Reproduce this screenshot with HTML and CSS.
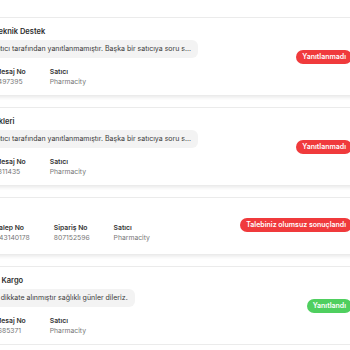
FILE: index.html
```html
<!DOCTYPE html>
<html lang="tr">

<head>
    <meta charset="UTF-8">
    <meta name="viewport" content="width=device-width, initial-scale=1.0">
    <title>Mesajlarım</title>
    <link rel="stylesheet" href="styles.css">
</head>

<body>
    <div class="messages">
        <div class="card">
            <div class="card-main">
                <div class="card-title">Ürün ve Teknik Destek</div>
                <div class="bubble">Mesaj satıcı tarafından yanıtlanmamıştır. Başka bir satıcıya soru s...</div>
                <div class="meta">
                    <div class="meta-item">
                        <span class="meta-label">Mesaj No</span>
                        <span class="meta-value">1497395</span>
                    </div>
                    <div class="meta-item">
                        <span class="meta-label">Satıcı</span>
                        <span class="meta-value">Pharmacity</span>
                    </div>
                </div>
            </div>
            <span class="status status-red">Yanıtlanmadı</span>
        </div>

        <div class="card">
            <div class="card-main">
                <div class="card-title">İlaç Özellikleri</div>
                <div class="bubble">Mesaj satıcı tarafından yanıtlanmamıştır. Başka bir satıcıya soru s...</div>
                <div class="meta">
                    <div class="meta-item">
                        <span class="meta-label">Mesaj No</span>
                        <span class="meta-value">1811435</span>
                    </div>
                    <div class="meta-item">
                        <span class="meta-label">Satıcı</span>
                        <span class="meta-value">Pharmacity</span>
                    </div>
                </div>
            </div>
            <span class="status status-red">Yanıtlanmadı</span>
        </div>

        <div class="card card-request">
            <div class="card-main">
                <div class="card-title">İade</div>
                <div class="meta">
                    <div class="meta-item">
                        <span class="meta-label">Talep No</span>
                        <span class="meta-value">243140178</span>
                    </div>
                    <div class="meta-item">
                        <span class="meta-label">Sipariş No</span>
                        <span class="meta-value">807152596</span>
                    </div>
                    <div class="meta-item">
                        <span class="meta-label">Satıcı</span>
                        <span class="meta-value">Pharmacity</span>
                    </div>
                </div>
            </div>
            <span class="status status-red">Talebiniz olumsuz sonuçlandı</span>
        </div>

        <div class="card">
            <div class="card-main">
                <div class="card-title">Sipariş ve Kargo</div>
                <div class="bubble">Öneriniz dikkate alınmıştır sağlıklı günler dileriz.</div>
                <div class="meta">
                    <div class="meta-item">
                        <span class="meta-label">Mesaj No</span>
                        <span class="meta-value">1685371</span>
                    </div>
                    <div class="meta-item">
                        <span class="meta-label">Satıcı</span>
                        <span class="meta-value">Pharmacity</span>
                    </div>
                </div>
            </div>
            <span class="status status-green">Yanıtlandı</span>
        </div>
    </div>
</body>

</html>
```

FILE: styles.css
```css
body {
    margin: 0;
    background-color: #fff;
    font-family: Inter, "Noto Sans", sans-serif;
    color: #333;
}

.messages {
    display: flex;
    flex-direction: column;
    gap: 11px;
    margin: 17px -16px 0 -50px;
}

.card {
    display: flex;
    justify-content: space-between;
    align-items: center;
    padding: 9px 13px 8px;
    background-color: #fff;
    border: 1px solid #ebebeb;
    box-shadow: 0 2px 3px rgba(0, 0, 0, 0.07);
}

.card-request {
    padding-bottom: 11px;
}

.card-main {
    display: flex;
    flex-direction: column;
    align-items: flex-start;
}

.card-title {
    margin-bottom: 3px;
    font-size: 7.5px;
    font-weight: 600;
    line-height: 10px;
    color: #2d2d2d;
}

.bubble {
    margin-bottom: 6px;
    padding: 4px 7px;
    font-size: 7px;
    line-height: 10px;
    color: #3a3a3a;
    background-color: #f3f3f3;
    border-radius: 6px;
}

.meta {
    display: flex;
    gap: 24px;
    margin-top: 3px;
    padding-left: 31px;
}

.meta-item {
    display: flex;
    flex-direction: column;
}

.meta-label {
    font-size: 6.8px;
    font-weight: 600;
    line-height: 10px;
    color: #333;
}

.meta-value {
    font-size: 6.8px;
    line-height: 10px;
    color: #777;
}

.status {
    padding: 0 6px;
    font-size: 7px;
    font-weight: 600;
    line-height: 14px;
    color: #fff;
    border-radius: 7px;
    white-space: nowrap;
}

.status-red {
    background-color: #f03a3c;
}

.status-green {
    background-color: #4fcf5f;
}
```
